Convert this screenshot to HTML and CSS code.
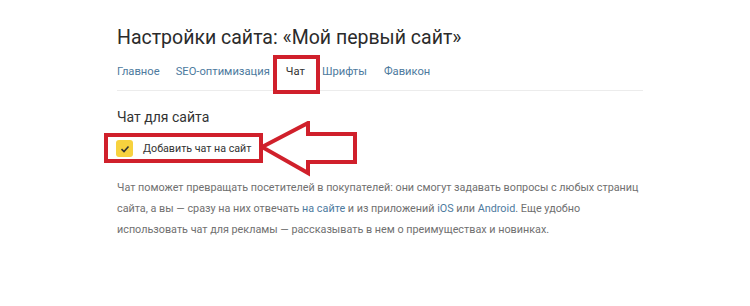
FILE: index.html
```html
<!DOCTYPE html>
<html lang="ru">
<head>
    <meta charset="UTF-8">
    <title>Настройки сайта</title>
    <link rel="stylesheet" href="styles.css">
</head>
<body>

<div class="page">
    <h1>Настройки сайта: «Мой первый сайт»</h1>

    <nav class="tabs">
        <a href="#" class="tab">Главное</a>
        <a href="#" class="tab">SEO-оптимизация</a>
        <a href="#" class="tab active">Чат</a>
        <a href="#" class="tab">Шрифты</a>
        <a href="#" class="tab">Фавикон</a>
    </nav>

    <h2>Чат для сайта</h2>

    <label class="check">
        <span class="box">
            <svg width="10" height="8" viewBox="0 0 10 8"><path d="M1.5 4.2 L4 6.5 L8.5 1.5" fill="none" stroke="#333" stroke-width="1.6"/></svg>
        </span>
        Добавить чат на сайт
    </label>

    <p class="info">
        Чат поможет превращать посетителей в покупателей: они смогут задавать вопросы с любых страниц
        сайта, а вы — сразу на них отвечать <a href="#">на сайте</a> и из приложений <a href="#">iOS</a> или <a href="#">Android</a>. Еще удобно
        использовать чат для рекламы — рассказывать в нем о преимуществах и новинках.
    </p>

    <!-- annotations -->
    <div class="mark mark-tab"></div>
    <div class="mark mark-check"></div>
    <svg class="arrow" width="110" height="62" viewBox="0 0 110 62">
        <polygon points="3,26 49,2 49,13 96,13 96,41 49,41 49,52" fill="none" stroke="#d0202b" stroke-width="4" stroke-linejoin="miter"/>
    </svg>
</div>

</body>
</html>
```

FILE: styles.css
```css
body {
    margin: 0;
    background-color: #fff;
    font-family: Roboto, "Noto Sans", sans-serif;
    color: #333;
}
.page {
    position: relative;
    width: 750px;
    height: 306px;
    padding: 24px 0 0 117px;
    box-sizing: border-box;
}
h1 {
    margin: 0;
    font-size: 19.5px;
    font-weight: 400;
    color: #2b2b2b;
    line-height: 28px;
}
.tabs {
    display: flex;
    gap: 16px;
    width: 526px;
    margin-top: 12px;
    padding-bottom: 10px;
    border-bottom: 1px solid #ececec;
}
.tab {
    font-size: 11.2px;
    color: #4d7a9e;
    text-decoration: none;
    line-height: 16px;
}
.tab:nth-child(n+4) {
    margin-left: 1px;
}
.tab.active {
    color: #333;
}
h2 {
    margin: 16px 0 0;
    font-size: 14px;
    font-weight: 400;
    line-height: 20px;
    color: #333;
}
.check {
    display: flex;
    align-items: center;
    gap: 10px;
    margin: 13px 0 0 -1px;
    font-size: 10.7px;
    color: #333;
}
.box {
    width: 17px;
    height: 17px;
    border-radius: 3px;
    background-color: #f7d23e;
    display: flex;
    align-items: center;
    justify-content: center;
}
.info {
    margin: 20px 0 0;
    width: 530px;
    font-size: 10.8px;
    line-height: 21px;
    color: #707070;
}
.info a {
    color: #4d7a9e;
    text-decoration: none;
}
.mark {
    position: absolute;
    border: 4px solid #d0202b;
    box-sizing: border-box;
}
.mark-tab {
    left: 273px;
    top: 55px;
    width: 47px;
    height: 39px;
}
.mark-check {
    left: 104px;
    top: 133px;
    width: 159px;
    height: 30px;
}
.arrow {
    position: absolute;
    left: 259px;
    top: 121px;
}
```
